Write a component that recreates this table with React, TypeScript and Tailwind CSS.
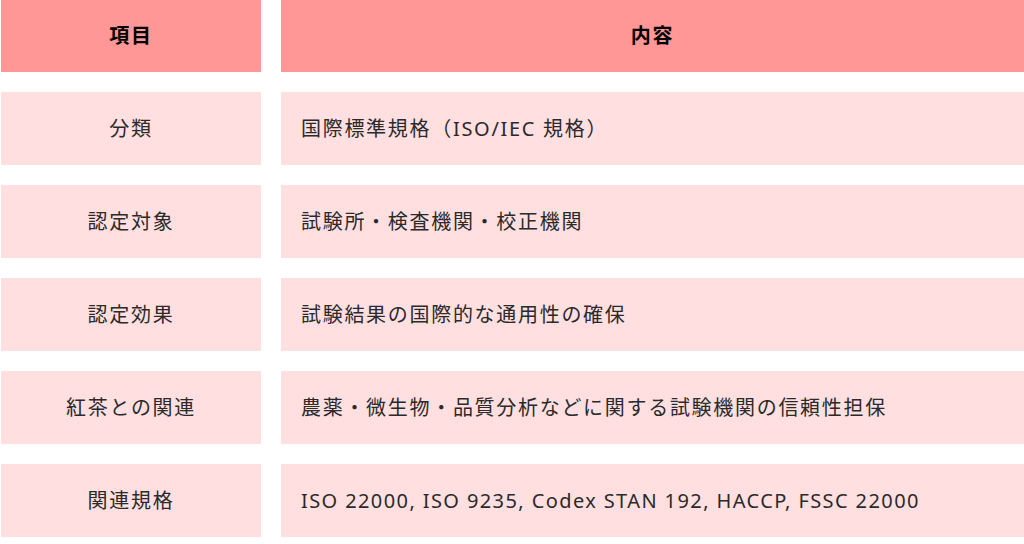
import * as React from 'react';

const rows: [string, string][] = [
  ['分類', '国際標準規格（ISO/IEC 規格）'],
  ['認定対象', '試験所・検査機関・校正機関'],
  ['認定効果', '試験結果の国際的な通用性の確保'],
  ['紅茶との関連', '農薬・微生物・品質分析などに関する試験機関の信頼性担保'],
  ['関連規格', 'ISO 22000, ISO 9235, Codex STAN 192, HACCP, FSSC 22000'],
];

export default function App(): React.ReactElement {
  return (
    <div
      className="w-[1024px] h-[544px] bg-white overflow-hidden text-[20px] tracking-[1.7px] text-[#2a2a2a]"
      style={{ fontFamily: '"Noto Sans", "Noto Sans CJK JP", sans-serif' }}
    >
      <div className="grid grid-cols-[260px_1fr] gap-x-[20px] gap-y-[20px] pl-[1px]">
        <div className="h-[72px] bg-[#ff9797] flex items-center justify-center font-bold text-black">
          項目
        </div>
        <div className="h-[72px] bg-[#ff9797] flex items-center justify-center font-bold text-black">
          内容
        </div>
        {rows.map(([label, value], i) => (
          <React.Fragment key={label}>
            <div className="h-[73px] bg-[#ffdfe0] flex items-center justify-center">{label}</div>
            <div
              className={
                i === rows.length - 1
                  ? 'h-[73px] bg-[#ffdfe0] flex items-center px-[20px] tracking-[1.4px]'
                  : 'h-[73px] bg-[#ffdfe0] flex items-center px-[20px]'
              }
            >
              {value}
            </div>
          </React.Fragment>
        ))}
      </div>
    </div>
  );
}
